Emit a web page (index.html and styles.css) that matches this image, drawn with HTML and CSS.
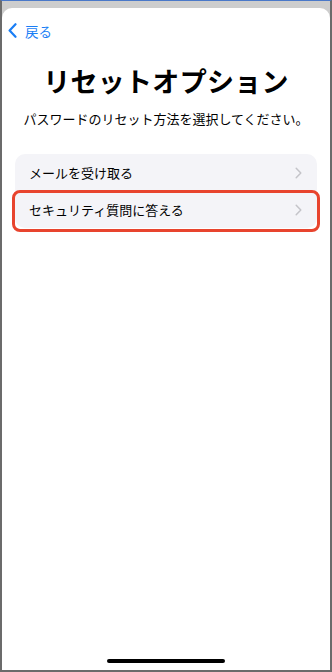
FILE: index.html
```html
<!DOCTYPE html>
<html lang="ja">
<head>
  <meta charset="UTF-8">
  <meta name="viewport" content="width=device-width, initial-scale=1.0">
  <title>リセットオプション</title>
  <link rel="stylesheet" href="styles.css">
</head>
<body>
  <div class="device">
    <div class="sheet">
      <!-- 戻るボタン -->
      <div class="nav">
        <a class="back" href="#">
          <svg width="9" height="15" viewBox="0 0 9 15"><path d="M7.5 1.2 L1.6 7.5 L7.5 13.8" fill="none" stroke="#1a7ef5" stroke-width="2.2" stroke-linecap="round" stroke-linejoin="round"/></svg>
          <span>戻る</span>
        </a>
      </div>

      <h1 class="title">リセットオプション</h1>
      <p class="lead">パスワードのリセット方法を選択してください。</p>

      <div class="options">
        <div class="option">
          <span>メールを受け取る</span>
          <svg class="chev" width="7" height="12" viewBox="0 0 7 12"><path d="M1.2 1.2 L5.8 6 L1.2 10.8" fill="none" stroke="#c4c4c9" stroke-width="1.5" stroke-linecap="round" stroke-linejoin="round"/></svg>
        </div>
        <div class="option selected">
          <span>セキュリティ質問に答える</span>
          <svg class="chev" width="7" height="12" viewBox="0 0 7 12"><path d="M1.2 1.2 L5.8 6 L1.2 10.8" fill="none" stroke="#c4c4c9" stroke-width="1.5" stroke-linecap="round" stroke-linejoin="round"/></svg>
        </div>
      </div>

      <div class="home-bar"></div>
    </div>
  </div>
</body>
</html>
```

FILE: styles.css
```css
body {
  margin: 0;
  font-family: "Noto Sans CJK JP", "Noto Sans", sans-serif;
  background: #fff;
}
.device {
  width: 332px;
  height: 672px;
  box-sizing: border-box;
  border: 2px solid #6b6b6b;
  border-top: 1px solid #4a78c8;
  background: #cdcdcd;
  padding-top: 7px;
  display: flex;
}
.sheet {
  flex: 1;
  background: #fff;
  border-radius: 10px 10px 0 0;
  display: flex;
  flex-direction: column;
  position: relative;
}
.nav {
  padding: 11px 0 0 6px;
  height: 24px;
}
.back {
  display: inline-flex;
  align-items: center;
  gap: 8px;
  color: #1a7ef5;
  text-decoration: none;
  font-size: 13.5px;
}
.title {
  margin: 20px 0 0;
  text-align: center;
  font-size: 27px;
  font-weight: 700;
  color: #000;
  letter-spacing: 0.3px;
  line-height: 36px;
}
.lead {
  margin: 10px 0 0;
  text-align: center;
  font-size: 13px;
  color: #000;
  line-height: 20px;
}
.options {
  margin: 25px 13px 0;
  background: #f4f4f8;
  border-radius: 10px;
}
.option {
  height: 37px;
  display: flex;
  align-items: center;
  justify-content: space-between;
  padding: 0 15px 0 14px;
  font-size: 13px;
  color: #000;
}
.option.selected {
  position: relative;
}
.option.selected::after {
  content: "";
  position: absolute;
  left: -3px;
  right: -3px;
  top: -1px;
  bottom: -4px;
  border: 3px solid #e8442e;
  border-radius: 8px;
}
.home-bar {
  position: absolute;
  bottom: 7px;
  left: 105px;
  width: 118px;
  height: 4px;
  border-radius: 2px;
  background: #000;
}
```
